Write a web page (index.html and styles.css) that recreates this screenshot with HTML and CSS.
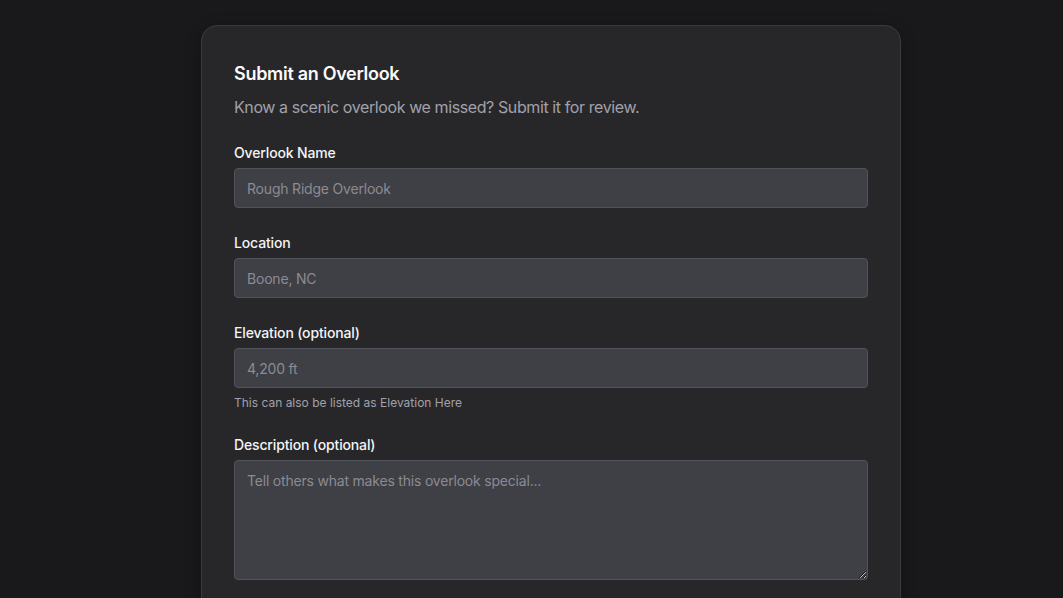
FILE: index.html
```html
<!DOCTYPE html>
<html lang="en">
<head>
  <meta charset="UTF-8">
  <title>Submit an Overlook</title>
  <link rel="stylesheet" href="styles.css">
</head>
<body>
  <div class="card">
    <h2>Submit an Overlook</h2>
    <p class="subtitle">Know a scenic overlook we missed? Submit it for review.</p>
    <form id="overlookForm">
      <div class="field">
        <label for="name">Overlook Name</label>
        <input type="text" id="name" name="name" placeholder="Rough Ridge Overlook">
      </div>
      <div class="field">
        <label for="location">Location</label>
        <input type="text" id="location" name="location" placeholder="Boone, NC">
      </div>
      <div class="field">
        <label for="elevation">Elevation (optional)</label>
        <input type="text" id="elevation" name="elevation" placeholder="4,200 ft">
        <p class="help">This can also be listed as Elevation Here</p>
      </div>
      <div class="field field-after-help">
        <label for="description">Description (optional)</label>
        <textarea id="description" name="description" placeholder="Tell others what makes this overlook special..."></textarea>
      </div>
    </form>
  </div>
</body>
</html>
```

FILE: styles.css
```css
body {
  font-family: Inter, "Noto Sans", sans-serif;
  background: #19191b;
  color: #f4f4f5;
  margin: 0;
  padding: 25px 0 40px 201px;
}
.card {
  background: #27272a;
  width: 634px;
  padding: 34px 32px 64px;
  border: 1px solid #3a3a3f;
  border-radius: 16px;
  box-shadow: 0 4px 16px rgba(0,0,0,0.3);
}
h2 {
  margin: 0;
  font-size: 18px;
  line-height: 28px;
  font-weight: 600;
  letter-spacing: -0.3px;
  color: #fafafa;
}
.subtitle {
  margin: 7px 0 0;
  font-size: 16px;
  line-height: 24px;
  letter-spacing: -0.4px;
  color: #a1a1aa;
}
.field {
  margin-top: 24px;
}
.subtitle + form .field:first-child {
  margin-top: 23px;
}
.field-after-help {
  margin-top: 22px;
}
label {
  display: block;
  font-size: 14px;
  line-height: 22px;
  font-weight: 500;
  letter-spacing: -0.15px;
  margin-bottom: 4px;
}
input, textarea {
  display: block;
  box-sizing: border-box;
  width: 100%;
  height: 40px;
  padding: 1px 12px 0;
  font-family: inherit;
  font-size: 14px;
  letter-spacing: -0.2px;
  color: #f4f4f5;
  background: #3f3f46;
  border: 1px solid #52525b;
  border-radius: 4px;
}
textarea {
  height: 120px;
  padding: 10px 12px;
  line-height: 20px;
  resize: vertical;
}
input::placeholder, textarea::placeholder {
  color: #8b8b93;
}
.help {
  margin: 6px 0 0;
  font-size: 12px;
  line-height: 18px;
  color: #a1a1aa;
}
```
